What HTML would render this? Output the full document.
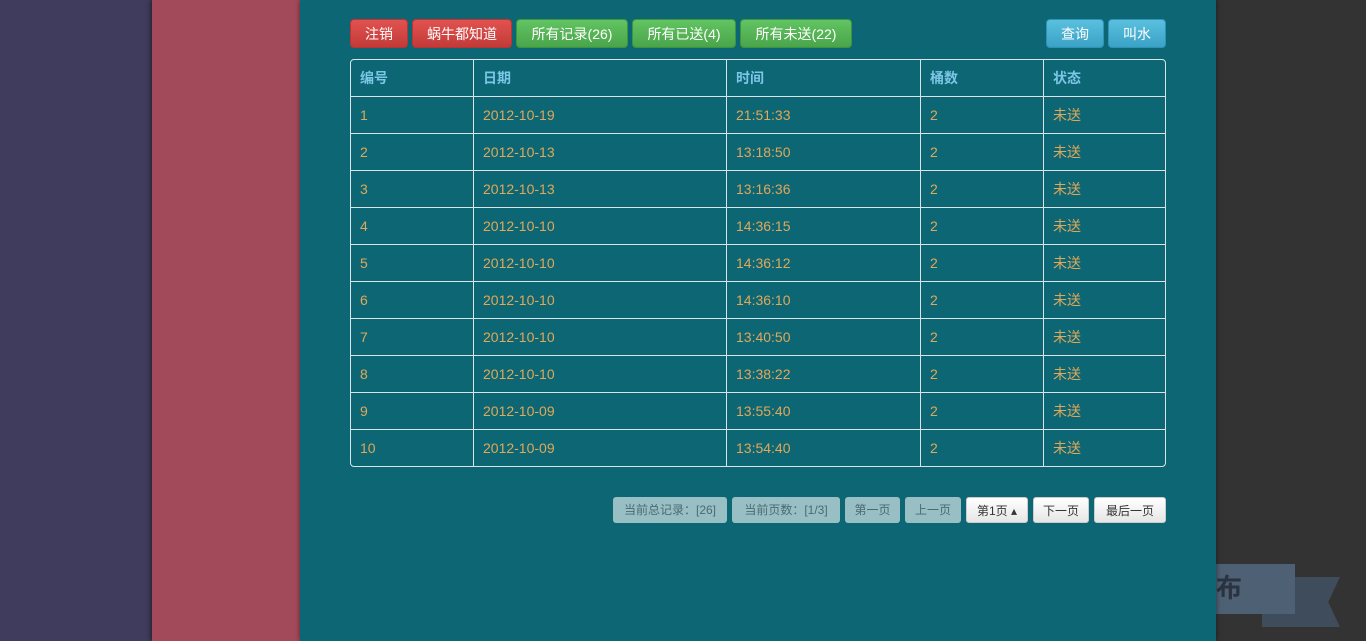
<!DOCTYPE html>
<html><head><meta charset="utf-8"><style>
body{margin:0;width:1366px;height:641px;overflow:hidden;position:relative;font-family:"Liberation Sans","Noto Sans CJK SC",sans-serif;background:#353535}
.p{position:absolute;top:0;height:641px}
.btn{position:absolute;top:19px;height:29px;line-height:29px;border-radius:4px;color:#fff;font-size:14px;text-align:center;box-sizing:border-box}
.r{background:linear-gradient(#e2524f,#c23b38);border:1px solid #b33}
.g{background:linear-gradient(#62c462,#4aa54a);border:1px solid #3f923f}
.b{background:linear-gradient(#5bc0de,#3aa2c6);border:1px solid #2f93b8}
table{position:absolute;left:350px;top:59px;width:816px;border-collapse:separate;border-spacing:0;border:1px solid #d8e4e6;border-radius:4px;font-size:14px}
td,th{height:37px;padding:0 0 0 9px;text-align:left;border-left:1px solid #d8e4e6;border-top:1px solid #d8e4e6;color:#e0a85a;font-weight:normal;box-sizing:border-box}
th{color:#7cc6e6;font-weight:bold;border-top:none;height:36px}
td:first-child,th:first-child{border-left:none}
.pg{position:absolute;top:497px;height:26px;line-height:26px;font-size:12px;border-radius:3px;text-align:center;box-sizing:border-box}
.d{background:#98c0c4;color:#4a6a70}
.w{background:linear-gradient(#fff,#e6e6e6);color:#333;border:1px solid #ccc}
</style></head><body>
<div class="p" style="left:0;width:152px;background:#403c5e"></div>
<div class="p" style="left:152px;width:150px;background:#a34a5a;box-shadow:-2px 0 4px rgba(0,0,0,.4)"></div>
<div class="p" style="left:1216px;width:150px;background:#333"></div>
<div style="position:absolute;left:1262px;top:577px;width:78px;height:50px;background:#3e4c5c;clip-path:polygon(0 0,100% 0,85% 50%,100% 100%,0 100%)"></div>
<div style="position:absolute;left:1216px;top:564px;width:79px;height:50px;background:#4d6074;color:#2b3340;font-size:26px;font-weight:bold;line-height:48px;padding-left:0">布</div>
<div class="p" style="left:300px;width:916px;background:#0d6673;box-shadow:0 0 5px rgba(0,0,0,.5)"></div>
<div class="btn r" style="left:350px;width:58px">注销</div>
<div class="btn r" style="left:412px;width:100px">蜗牛都知道</div>
<div class="btn g" style="left:516px;width:112px">所有记录(26)</div>
<div class="btn g" style="left:632px;width:104px">所有已送(4)</div>
<div class="btn g" style="left:740px;width:112px">所有未送(22)</div>
<div class="btn b" style="left:1046px;width:58px">查询</div>
<div class="btn b" style="left:1108px;width:58px">叫水</div>
<table>
<tr><th style="width:122px">编号</th><th style="width:253px">日期</th><th style="width:194px">时间</th><th style="width:123px">桶数</th><th>状态</th></tr>
<tr><td>1</td><td>2012-10-19</td><td>21:51:33</td><td>2</td><td>未送</td></tr>
<tr><td>2</td><td>2012-10-13</td><td>13:18:50</td><td>2</td><td>未送</td></tr>
<tr><td>3</td><td>2012-10-13</td><td>13:16:36</td><td>2</td><td>未送</td></tr>
<tr><td>4</td><td>2012-10-10</td><td>14:36:15</td><td>2</td><td>未送</td></tr>
<tr><td>5</td><td>2012-10-10</td><td>14:36:12</td><td>2</td><td>未送</td></tr>
<tr><td>6</td><td>2012-10-10</td><td>14:36:10</td><td>2</td><td>未送</td></tr>
<tr><td>7</td><td>2012-10-10</td><td>13:40:50</td><td>2</td><td>未送</td></tr>
<tr><td>8</td><td>2012-10-10</td><td>13:38:22</td><td>2</td><td>未送</td></tr>
<tr><td>9</td><td>2012-10-09</td><td>13:55:40</td><td>2</td><td>未送</td></tr>
<tr><td>10</td><td>2012-10-09</td><td>13:54:40</td><td>2</td><td>未送</td></tr>
</table>
<div class="pg d" style="left:613px;width:114px">当前总记录：[26]</div>
<div class="pg d" style="left:732px;width:108px">当前页数：[1/3]</div>
<div class="pg d" style="left:845px;width:55px">第一页</div>
<div class="pg d" style="left:905px;width:56px">上一页</div>
<div class="pg w" style="left:966px;width:62px">第1页 ▴</div>
<div class="pg w" style="left:1033px;width:56px">下一页</div>
<div class="pg w" style="left:1094px;width:72px">最后一页</div>
</body></html>
